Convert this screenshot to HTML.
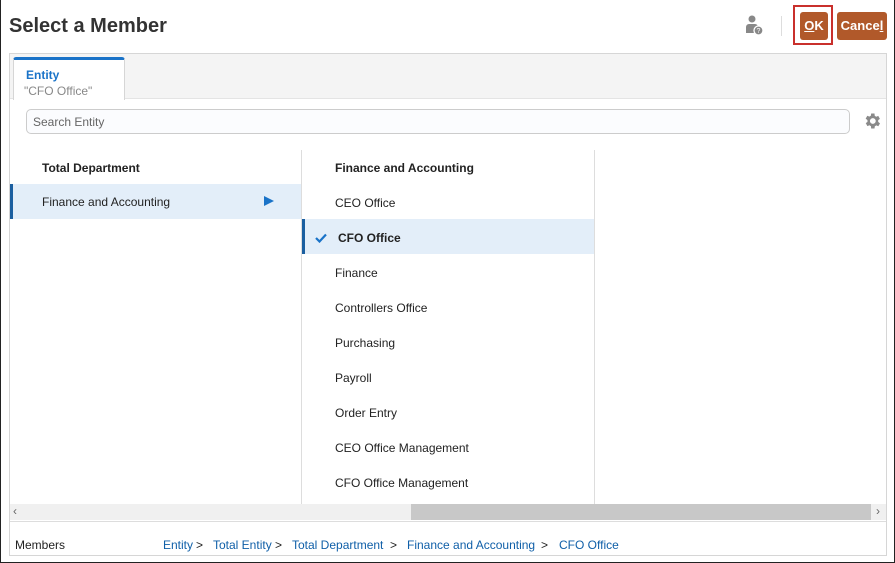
<!DOCTYPE html>
<html><head><style>
*{box-sizing:border-box;margin:0;padding:0}
body{width:895px;height:563px;overflow:hidden;font-family:"Liberation Sans",sans-serif;background:#fff;position:relative;font-size:12px;color:#222}
.frame{position:absolute;left:0;top:0;width:895px;height:563px;border:1px solid #222;border-top:none}
.abs{position:absolute}
h1{position:absolute;left:9px;top:15px;font-size:20px;font-weight:bold;color:#333}
.btn{position:absolute;top:12px;height:28px;background:#b1592a;color:#fff;font-weight:bold;font-size:13px;border-radius:3px;text-align:center;line-height:28px}
.panel{position:absolute;left:9px;top:53px;width:878px;height:503px;border:1px solid #d6d6d6}
.row{position:absolute;height:35px;line-height:37px;font-size:12px}
.crumb{color:#0f5fa8;position:absolute;top:484px}
.gt{position:absolute;top:484px}
</style></head><body>
<div class="frame"></div>
<h1>Select a Member</h1>
<svg class="abs" style="left:745px;top:15px" width="20" height="22" viewBox="0 0 20 22"><circle cx="7" cy="4" r="3.5" fill="#888"/><path d="M1 18v-6a3 3 0 0 1 3-3h6a3 3 0 0 1 3 3v6z" fill="#888"/><circle cx="13.5" cy="15.5" r="4.5" fill="#888" stroke="#fff" stroke-width="1.3"/><text x="13.5" y="18" font-size="7" fill="#fff" text-anchor="middle" font-family="Liberation Sans">?</text></svg>
<div class="abs" style="left:781px;top:16px;width:1px;height:20px;background:#ddd"></div>
<div class="abs" style="left:793px;top:5px;width:40px;height:40px;border:2px solid #c9302c"></div>
<div class="btn" style="left:800px;width:28px"><u>O</u>K</div>
<div class="btn" style="left:837px;width:50px">Cance<u>l</u></div>
<div class="panel">
 <div class="abs" style="left:0;top:0;width:876px;height:45px;background:#f4f4f4;border-bottom:1px solid #e4e4e4"></div>
 <div class="abs" style="left:3px;top:3px;width:112px;height:43px;background:#fff;border:1px solid #d6d6d6;border-top:3px solid #1a73c8;border-bottom:none;border-radius:3px 3px 0 0"></div>
 <div class="abs" style="left:16px;top:14px;font-size:12px;font-weight:bold;color:#1a73c8">Entity</div>
 <div class="abs" style="left:14px;top:30px;font-size:12px;color:#888">"CFO Office"</div>
 <div class="abs" style="left:16px;top:55px;width:824px;height:25px;border:1px solid #ccc;border-radius:5px;background:#fbfcfe;color:#666;padding-left:6px;line-height:25px">Search Entity</div>
 <svg class="abs" style="left:852px;top:57px" width="20" height="20" viewBox="0 0 24 24"><path fill="#8a8a8a" d="M19.4 13a7.5 7.5 0 0 0 0-2l2.1-1.6-2-3.5-2.5 1a7.5 7.5 0 0 0-1.7-1L15 3h-4l-.4 2.7a7.5 7.5 0 0 0-1.7 1l-2.5-1-2 3.5L6.6 11a7.5 7.5 0 0 0 0 2l-2.1 1.6 2 3.5 2.5-1a7.5 7.5 0 0 0 1.7 1L11 21h4l.4-2.7a7.5 7.5 0 0 0 1.7-1l2.5 1 2-3.5zM13 15.5a3.5 3.5 0 1 1 0-7 3.5 3.5 0 0 1 0 7z"/></svg>
 <div class="abs" style="left:291px;top:96px;width:1px;height:354px;background:#ddd"></div>
 <div class="abs" style="left:584px;top:96px;width:1px;height:354px;background:#ddd"></div>
 <div class="row" style="left:32px;top:96px;font-weight:bold">Total Department</div>
 <div class="abs" style="left:0;top:130px;width:291px;height:35px;background:#e3eef9;border-left:3px solid #1b5fa0"></div>
 <div class="row" style="left:32px;top:130px">Finance and Accounting</div>
 <div class="abs" style="left:254px;top:142px;width:0;height:0;border-left:10px solid #1a73c8;border-top:5.5px solid transparent;border-bottom:5.5px solid transparent"></div>
 <div class="row" style="left:325px;top:96px;font-weight:bold">Finance and Accounting</div>
 <div class="row" style="left:325px;top:131px">CEO Office</div>
 <div class="abs" style="left:292px;top:165px;width:292px;height:35px;background:#e3eef9;border-left:3px solid #1b5fa0"></div>
 <svg class="abs" style="left:305px;top:179px" width="12" height="10" viewBox="0 0 12 10"><path d="M1 5l3.5 3.5L11 1.5" stroke="#1a73c8" stroke-width="2.2" fill="none"/></svg>
 <div class="row" style="left:328px;top:166px;font-weight:bold">CFO Office</div>
 <div class="row" style="left:325px;top:201px">Finance</div>
 <div class="row" style="left:325px;top:236px">Controllers Office</div>
 <div class="row" style="left:325px;top:271px">Purchasing</div>
 <div class="row" style="left:325px;top:306px">Payroll</div>
 <div class="row" style="left:325px;top:341px">Order Entry</div>
 <div class="row" style="left:325px;top:376px">CEO Office Management</div>
 <div class="row" style="left:325px;top:411px">CFO Office Management</div>
 <div class="abs" style="left:0;top:450px;width:876px;height:16px;background:#f0f0f0"></div>
 <div class="abs" style="left:401px;top:450px;width:460px;height:16px;background:#c8c8c8"></div>
 <div class="abs" style="left:3px;top:450px;font-size:12px;color:#666">‹</div>
 <div class="abs" style="left:866px;top:450px;font-size:12px;color:#666">›</div>
 <div class="abs" style="left:0;top:467px;width:876px;height:1px;background:#ddd"></div>
 <div class="abs" style="left:5px;top:484px">Members</div>
 <span class="crumb" style="left:153px">Entity</span><span class="gt" style="left:186px">&gt;</span>
 <span class="crumb" style="left:203px">Total Entity</span><span class="gt" style="left:265px">&gt;</span>
 <span class="crumb" style="left:282px">Total Department</span><span class="gt" style="left:380px">&gt;</span>
 <span class="crumb" style="left:397px">Finance and Accounting</span><span class="gt" style="left:531px">&gt;</span>
 <span class="crumb" style="left:549px">CFO Office</span>
</div>
</body></html>
